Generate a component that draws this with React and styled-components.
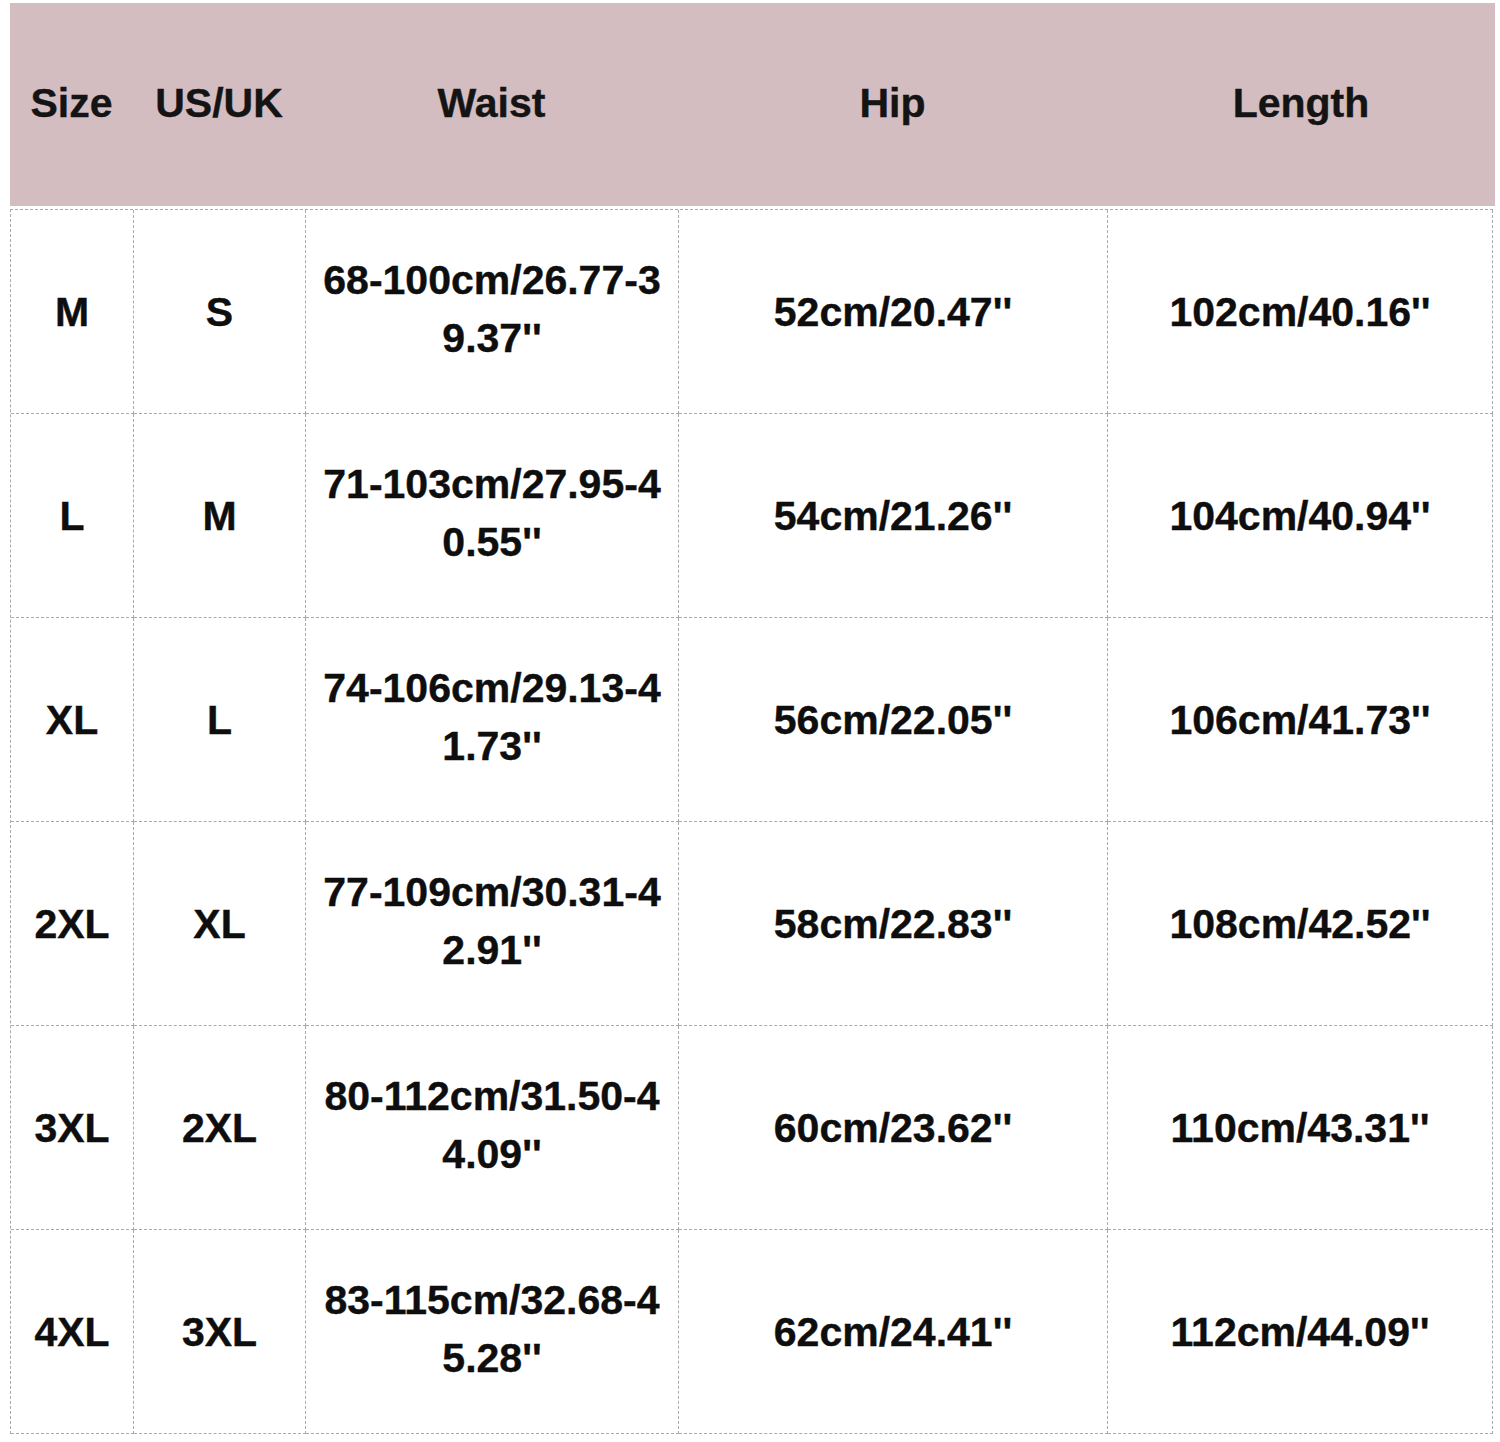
import React from "react";
import styled, { createGlobalStyle } from "styled-components";

const Global = createGlobalStyle`
  html, body { margin: 0; padding: 0; background: #ffffff; }
  body { font-family: "Liberation Sans", Arial, sans-serif; }
`;

const Page = styled.div`
  padding: 3px 0 0 10px;
  width: 1500px;
  height: 1442px;
  box-sizing: border-box;
`;

const Header = styled.div`
  display: grid;
  grid-template-columns: 123px 172px 373px 429px 388px;
  width: 1485px;
  height: 203px;
  background: #d4bdc1;
  margin-bottom: 3px;
`;

const HeadCell = styled.div`
  display: flex;
  align-items: center;
  justify-content: center;
  font-size: 41px;
  font-weight: 700;
  color: #141414;
  -webkit-text-stroke: 0.4px #141414;
  padding-bottom: 2px;
`;

const Body = styled.div`
  display: grid;
  grid-template-columns: 123px 172px 373px 429px 385px;
  border-top: 1px dashed #aaaaaa;
  border-left: 1px dashed #aaaaaa;
  width: max-content;
`;

const Cell = styled.div`
  border-right: 1px dashed #aaaaaa;
  border-bottom: 1px dashed #aaaaaa;
  display: flex;
  align-items: center;
  justify-content: center;
  text-align: center;
  font-size: 41px;
  font-weight: 700;
  color: #0e0e0e;
  -webkit-text-stroke: 0.4px #0e0e0e;
  line-height: ${(p) => (p.$wrap ? "58px" : "46px")};
  padding-bottom: ${(p) => (p.$wrap ? "6px" : "0")};
  box-sizing: border-box;
  height: 204px;
`;

const rows = [
  ["M", "S", ["68-100cm/26.77-3", "9.37''"], "52cm/20.47''", "102cm/40.16''"],
  ["L", "M", ["71-103cm/27.95-4", "0.55''"], "54cm/21.26''", "104cm/40.94''"],
  ["XL", "L", ["74-106cm/29.13-4", "1.73''"], "56cm/22.05''", "106cm/41.73''"],
  ["2XL", "XL", ["77-109cm/30.31-4", "2.91''"], "58cm/22.83''", "108cm/42.52''"],
  ["3XL", "2XL", ["80-112cm/31.50-4", "4.09''"], "60cm/23.62''", "110cm/43.31''"],
  ["4XL", "3XL", ["83-115cm/32.68-4", "5.28''"], "62cm/24.41''", "112cm/44.09''"],
];

export default function App() {
  return (
    <Page>
      <Global />
      <Header>
        <HeadCell>Size</HeadCell>
        <HeadCell>US/UK</HeadCell>
        <HeadCell>Waist</HeadCell>
        <HeadCell>Hip</HeadCell>
        <HeadCell>Length</HeadCell>
      </Header>
      <Body>
        {rows.map((r, i) => (
          <React.Fragment key={i}>
            <Cell>{r[0]}</Cell>
            <Cell>{r[1]}</Cell>
            <Cell $wrap>
              <div>
                {r[2][0]}
                <br />
                {r[2][1]}
              </div>
            </Cell>
            <Cell>{r[3]}</Cell>
            <Cell>{r[4]}</Cell>
          </React.Fragment>
        ))}
      </Body>
    </Page>
  );
}
